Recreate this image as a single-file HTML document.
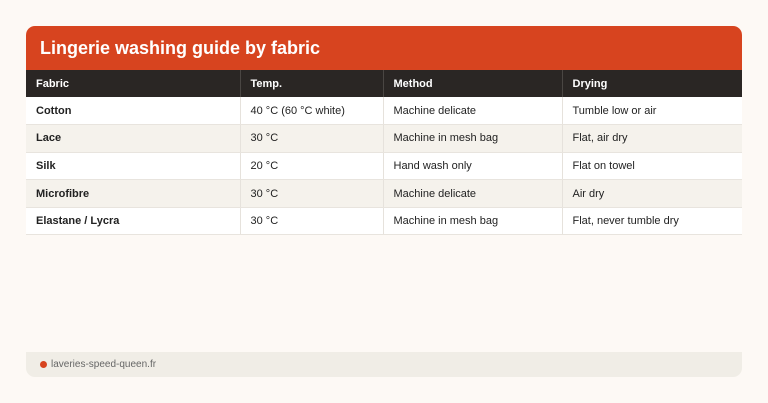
<!DOCTYPE html>
<html><head><style>
body{margin:0;width:768px;height:403px;background:#fdf9f5;font-family:"Liberation Sans",sans-serif;position:relative;overflow:hidden}
.title{position:absolute;left:26px;top:26px;width:716px;height:44px;background:#d7441f;border-radius:9px 9px 0 0;color:#fff;font-weight:bold;font-size:18px;line-height:44px;box-sizing:border-box;padding-left:14px}
table{position:absolute;left:26px;top:70px;width:716px;border-collapse:collapse;table-layout:fixed;font-size:11px;color:#222}
td,th{text-align:left;padding:0 0 0 10px;border-right:1px solid #e6e2dc;border-bottom:1px solid #e8e4de;box-sizing:border-box}
th{background:#2a2624;color:#fff;height:27px;font-weight:bold;border-right:1px solid #4a4643;border-bottom:none}
td{height:27.6px}
td:last-child,th:last-child{border-right:none}
tr td{background:#fff}
tr:nth-child(odd) td{background:#f5f2ec}
td:first-child{font-weight:bold}
.foot{position:absolute;left:26px;top:352px;width:716px;height:25px;background:#f0ede6;border-radius:0 0 9px 9px;font-size:10px;color:#666;line-height:25px;box-sizing:border-box;padding-left:25px}
.dot{position:absolute;left:14px;top:9px;width:7px;height:7px;border-radius:50%;background:#d7441f}
</style></head><body>
<div class="title">Lingerie washing guide by fabric</div>
<table>
<colgroup><col style="width:214px"><col style="width:143px"><col style="width:179px"><col></colgroup>
<tr><th>Fabric</th><th>Temp.</th><th>Method</th><th>Drying</th></tr>
<tr><td>Cotton</td><td>40 °C (60 °C white)</td><td>Machine delicate</td><td>Tumble low or air</td></tr>
<tr><td>Lace</td><td>30 °C</td><td>Machine in mesh bag</td><td>Flat, air dry</td></tr>
<tr><td>Silk</td><td>20 °C</td><td>Hand wash only</td><td>Flat on towel</td></tr>
<tr><td>Microfibre</td><td>30 °C</td><td>Machine delicate</td><td>Air dry</td></tr>
<tr><td>Elastane / Lycra</td><td>30 °C</td><td>Machine in mesh bag</td><td>Flat, never tumble dry</td></tr>
</table>
<div class="foot"><span class="dot"></span>laveries-speed-queen.fr</div>
</body></html>
